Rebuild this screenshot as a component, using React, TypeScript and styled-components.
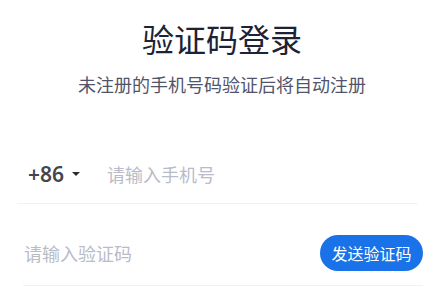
import React from 'react';
import styled, { createGlobalStyle } from 'styled-components';

const GlobalStyle = createGlobalStyle`
  html, body {
    margin: 0;
    padding: 0;
    background: #ffffff;
  }
  body {
    font-family: "Noto Sans", "Noto Sans CJK SC", sans-serif;
  }
  * {
    box-sizing: border-box;
  }
`;

const Page = styled.div`
  width: 444px;
  height: 287px;
  overflow: hidden;
  display: flex;
  flex-direction: column;
`;

const Title = styled.h1`
  margin: 16px 0 0;
  font-size: 32px;
  line-height: 44px;
  font-weight: 400;
  text-align: center;
  color: #1d2236;
  font-family: "Noto Sans CJK SC", sans-serif;
`;

const Subtitle = styled.p`
  margin: 11px 0 0;
  font-size: 18px;
  line-height: 26px;
  text-align: center;
  color: #50556b;
  font-family: "Noto Sans CJK SC", sans-serif;
`;

const Field = styled.div<{ $left: number; $right: number; $top: number; $height: number }>`
  margin: ${p => p.$top}px ${p => p.$right}px 0 ${p => p.$left}px;
  height: ${p => p.$height}px;
  display: flex;
  align-items: center;
  border-bottom: 1px solid #f1f2f4;
`;

const Prefix = styled.button`
  display: flex;
  align-items: center;
  gap: 8px;
  margin-left: 11px;
  padding: 0;
  border: none;
  background: none;
  font-family: "Noto Sans", sans-serif;
  font-size: 21px;
  font-weight: 600;
  color: #44464d;
  cursor: pointer;
`;

const Caret = styled.span`
  width: 0;
  height: 0;
  border-left: 4.5px solid transparent;
  border-right: 4.5px solid transparent;
  border-top: 4px solid #2a2c33;
`;

const Input = styled.input<{ $indent: number }>`
  flex: 1;
  min-width: 0;
  margin-left: ${p => p.$indent}px;
  padding: 0;
  border: none;
  outline: none;
  background: transparent;
  font-family: "Noto Sans CJK SC", sans-serif;
  font-size: 18px;
  color: #333640;

  &::placeholder {
    color: #b9bcc7;
  }
`;

const SendButton = styled.button`
  height: 36px;
  width: 103px;
  padding: 0;
  border: none;
  border-radius: 18px;
  background: #1a72e8;
  color: #ffffff;
  font-family: "Noto Sans CJK SC", sans-serif;
  font-size: 16px;
  cursor: pointer;
`;

export default function App() {
  return (
    <>
      <GlobalStyle />
      <Page>
        <Title>验证码登录</Title>
        <Subtitle>未注册的手机号码验证后将自动注册</Subtitle>
        <Field $left={17} $right={26} $top={48} $height={59}>
          <Prefix>
            +86
            <Caret />
          </Prefix>
          <Input $indent={27} placeholder="请输入手机号" />
        </Field>
        <Field $left={23} $right={21} $top={17} $height={65}>
          <Input $indent={1} placeholder="请输入验证码" />
          <SendButton>发送验证码</SendButton>
        </Field>
      </Page>
    </>
  );
}
